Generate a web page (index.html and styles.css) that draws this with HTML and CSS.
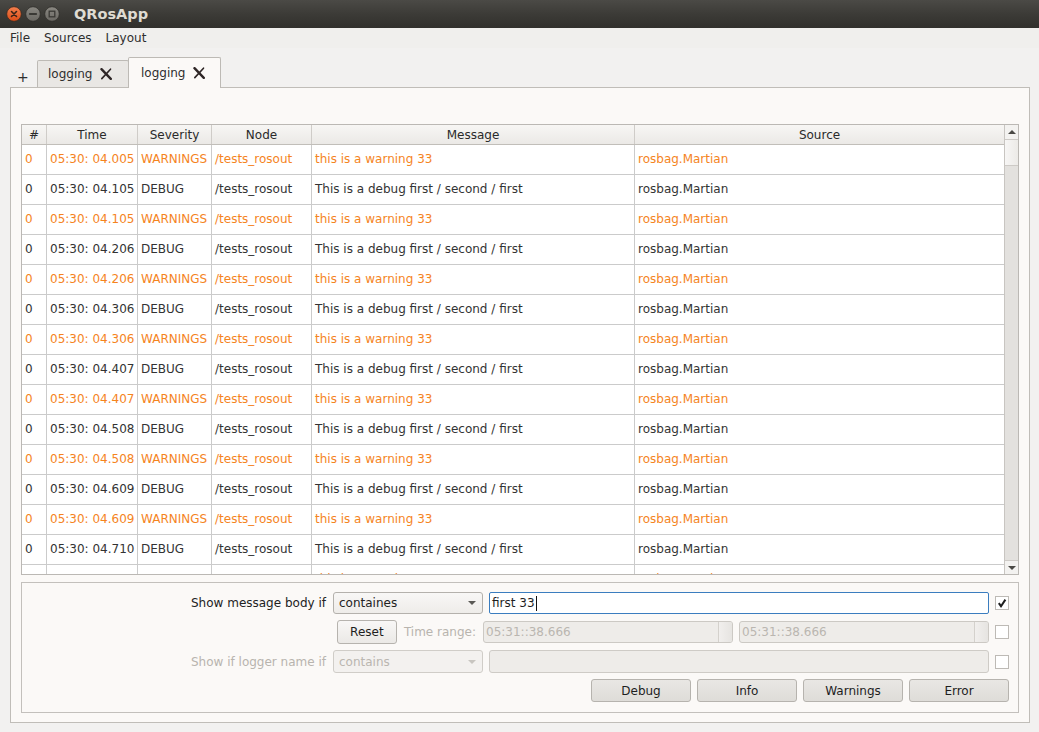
FILE: index.html
```html
<!DOCTYPE html>
<html>
<head>
<meta charset="utf-8">
<link rel="stylesheet" href="styles.css">
</head>
<body>
<div class="titlebar">
  <div class="wbtns">
    <svg class="wbtn" width="16" height="16" viewBox="0 0 16 16"><defs><linearGradient id="gc" x1="0" y1="0" x2="0" y2="1"><stop offset="0" stop-color="#f4804e"/><stop offset="1" stop-color="#dd4c17"/></linearGradient></defs><circle cx="8" cy="8" r="7.3" fill="url(#gc)" stroke="#3a2a20" stroke-width="0.8"/><path d="M5.5 5.5 L10.5 10.5 M10.5 5.5 L5.5 10.5" stroke="#3b2418" stroke-width="1.6" stroke-linecap="round"/></svg>
    <svg class="wbtn" width="16" height="16" viewBox="0 0 16 16"><defs><linearGradient id="gg" x1="0" y1="0" x2="0" y2="1"><stop offset="0" stop-color="#8a8882"/><stop offset="1" stop-color="#6a6863"/></linearGradient></defs><circle cx="8" cy="8" r="7.3" fill="url(#gg)" stroke="#2e2d2a" stroke-width="0.8"/><path d="M4.8 8 H11.2" stroke="#3a3935" stroke-width="1.8" stroke-linecap="round"/></svg>
    <svg class="wbtn" width="16" height="16" viewBox="0 0 16 16"><circle cx="8" cy="8" r="7.3" fill="url(#gg)" stroke="#2e2d2a" stroke-width="0.8"/><rect x="5.2" y="5.2" width="5.6" height="5.6" fill="none" stroke="#3a3935" stroke-width="1.3"/></svg>
  </div>
  <div class="wtitle">QRosApp</div>
</div>
<div class="menubar">
  <span class="mitem">File</span>
  <span class="mitem">Sources</span>
  <span class="mitem">Layout</span>
</div>
<div class="tabbar">
  <span class="plus">+</span>
  <div class="tab">
    <span>logging</span>
    <svg class="tabx" width="12" height="12" viewBox="0 0 12 12"><path d="M1.5 1.2 L10.8 10.8" stroke="#2e2626" stroke-width="2.4" stroke-linecap="round"/><path d="M10.5 1.2 L1.8 10.6" stroke="#2e2626" stroke-width="1.6" stroke-linecap="round"/></svg>
  </div>
  <div class="tab active">
    <span>logging</span>
    <svg class="tabx" width="12" height="12" viewBox="0 0 12 12"><path d="M1.5 1.2 L10.8 10.8" stroke="#2e2626" stroke-width="2.4" stroke-linecap="round"/><path d="M10.5 1.2 L1.8 10.6" stroke="#2e2626" stroke-width="1.6" stroke-linecap="round"/></svg>
  </div>
</div>
<div class="pane">
  <div class="tablebox">
    <div class="tablecol">
      <div class="row head">
        <div class="c">#</div><div class="c">Time</div><div class="c">Severity</div><div class="c">Node</div><div class="c">Message</div><div class="c last">Source</div>
      </div>
      <div class="row warn"><div class="c">0</div><div class="c">05:30: 04.005</div><div class="c">WARNINGS</div><div class="c">/tests_rosout</div><div class="c">this is a warning 33</div><div class="c last">rosbag.Martian</div></div>
      <div class="row"><div class="c">0</div><div class="c">05:30: 04.105</div><div class="c">DEBUG</div><div class="c">/tests_rosout</div><div class="c">This is a debug first / second / first</div><div class="c last">rosbag.Martian</div></div>
      <div class="row warn"><div class="c">0</div><div class="c">05:30: 04.105</div><div class="c">WARNINGS</div><div class="c">/tests_rosout</div><div class="c">this is a warning 33</div><div class="c last">rosbag.Martian</div></div>
      <div class="row"><div class="c">0</div><div class="c">05:30: 04.206</div><div class="c">DEBUG</div><div class="c">/tests_rosout</div><div class="c">This is a debug first / second / first</div><div class="c last">rosbag.Martian</div></div>
      <div class="row warn"><div class="c">0</div><div class="c">05:30: 04.206</div><div class="c">WARNINGS</div><div class="c">/tests_rosout</div><div class="c">this is a warning 33</div><div class="c last">rosbag.Martian</div></div>
      <div class="row"><div class="c">0</div><div class="c">05:30: 04.306</div><div class="c">DEBUG</div><div class="c">/tests_rosout</div><div class="c">This is a debug first / second / first</div><div class="c last">rosbag.Martian</div></div>
      <div class="row warn"><div class="c">0</div><div class="c">05:30: 04.306</div><div class="c">WARNINGS</div><div class="c">/tests_rosout</div><div class="c">this is a warning 33</div><div class="c last">rosbag.Martian</div></div>
      <div class="row"><div class="c">0</div><div class="c">05:30: 04.407</div><div class="c">DEBUG</div><div class="c">/tests_rosout</div><div class="c">This is a debug first / second / first</div><div class="c last">rosbag.Martian</div></div>
      <div class="row warn"><div class="c">0</div><div class="c">05:30: 04.407</div><div class="c">WARNINGS</div><div class="c">/tests_rosout</div><div class="c">this is a warning 33</div><div class="c last">rosbag.Martian</div></div>
      <div class="row"><div class="c">0</div><div class="c">05:30: 04.508</div><div class="c">DEBUG</div><div class="c">/tests_rosout</div><div class="c">This is a debug first / second / first</div><div class="c last">rosbag.Martian</div></div>
      <div class="row warn"><div class="c">0</div><div class="c">05:30: 04.508</div><div class="c">WARNINGS</div><div class="c">/tests_rosout</div><div class="c">this is a warning 33</div><div class="c last">rosbag.Martian</div></div>
      <div class="row"><div class="c">0</div><div class="c">05:30: 04.609</div><div class="c">DEBUG</div><div class="c">/tests_rosout</div><div class="c">This is a debug first / second / first</div><div class="c last">rosbag.Martian</div></div>
      <div class="row warn"><div class="c">0</div><div class="c">05:30: 04.609</div><div class="c">WARNINGS</div><div class="c">/tests_rosout</div><div class="c">this is a warning 33</div><div class="c last">rosbag.Martian</div></div>
      <div class="row"><div class="c">0</div><div class="c">05:30: 04.710</div><div class="c">DEBUG</div><div class="c">/tests_rosout</div><div class="c">This is a debug first / second / first</div><div class="c last">rosbag.Martian</div></div>
      <div class="row warn"><div class="c">0</div><div class="c">05:30: 04.710</div><div class="c">WARNINGS</div><div class="c">/tests_rosout</div><div class="c">this is a warning 33</div><div class="c last">rosbag.Martian</div></div>
    </div>
    <div class="vscroll">
      <div class="sb-btn up"><span class="tri-up"></span></div>
      <div class="sb-handle"></div>
      <div class="sb-track"></div>
      <div class="sb-btn down"><span class="tri-down"></span></div>
    </div>
  </div>
  <div class="filters">
    <div class="frow r1">
      <span class="flabel">Show message body if</span>
      <div class="combo"><span>containes</span><span class="carrow"></span></div>
      <div class="edit focus"><span>first 33</span><span class="caret"></span></div>
      <div class="check on"><svg width="12" height="12" viewBox="0 0 12 12"><path d="M2.8 6.2 L5 9.2 L9.4 2.6" fill="none" stroke="#1e1e1e" stroke-width="2"/></svg></div>
    </div>
    <div class="frow r2">
      <div class="btn reset">Reset</div>
      <span class="flabel dis">Time range:</span>
      <div class="timeedit"><span>05:31::38.666</span><span class="spin"></span></div>
      <div class="timeedit"><span>05:31::38.666</span><span class="spin"></span></div>
      <div class="check"></div>
    </div>
    <div class="frow r3">
      <span class="flabel dis">Show if logger name if</span>
      <div class="combo disabled"><span>contains</span><span class="carrow"></span></div>
      <div class="edit disabled"></div>
      <div class="check"></div>
    </div>
    <div class="frow r4">
      <div class="btn lvl">Debug</div>
      <div class="btn lvl">Info</div>
      <div class="btn lvl">Warnings</div>
      <div class="btn lvl">Error</div>
    </div>
  </div>
</div>
</body>
</html>
```
FILE: styles.css
```css
* { box-sizing: border-box; }
html, body { margin: 0; padding: 0; }
body {
  width: 1039px;
  height: 732px;
  overflow: hidden;
  background: #f2f1f0;
  font-family: "DejaVu Sans", sans-serif;
  font-size: 12px;
  color: #333333;
}

/* title bar */
.titlebar {
  height: 28px;
  background: linear-gradient(#4b4a46, #3c3b37 50%, #31302c);
  display: flex;
  align-items: center;
  padding-left: 6px;
}
.wbtns { display: flex; gap: 3px; align-items: center; }
.wbtn { display: block; }
.wtitle {
  margin-left: 14px;
  font-weight: bold;
  font-size: 14.5px;
  color: #dfdbd2;
}

/* menu */
.menubar {
  height: 20px;
  display: flex;
  align-items: center;
  padding-left: 10px;
  background: #f0efed;
}
.mitem { margin-right: 14px; color: #2e2e2e; }

/* tabs */
.tabbar {
  height: 39px;
  display: flex;
  align-items: flex-end;
  padding-left: 17px;
}
.plus {
  font-size: 14px;
  color: #2e2e2e;
  width: 20px;
  margin-bottom: 2px;
}
.tab {
  height: 27px;
  width: 92px;
  border: 1px solid #bdbab5;
  border-bottom: none;
  border-radius: 2px 2px 0 0;
  background: #e9e7e4;
  display: flex;
  align-items: center;
  padding-left: 10px;
  gap: 8px;
  color: #2e2e2e;
}
.tab.active {
  height: 31px;
  width: 93px;
  margin-bottom: -1px;
  margin-left: -1px;
  background: #fbf9f7;
  position: relative;
  z-index: 1;
  padding-left: 12px;
  padding-bottom: 1px;
}
.tabx { display: block; }

/* pane */
.pane {
  height: 636px;
  margin: 0 9px 0 10px;
  border: 1px solid #c0bdb8;
  background: #fbf9f7;
  padding: 36px 10px 9px 10px;
  display: flex;
  flex-direction: column;
  gap: 7px;
}

/* table */
.tablebox {
  height: 451px;
  border: 1px solid #bbb8b4;
  display: flex;
  background: #ffffff;
  overflow: hidden;
  flex-shrink: 0;
}
.tablecol {
  width: 982px;
  height: 449px;
  overflow: hidden;
}
.row {
  display: grid;
  grid-template-columns: 25px 91px 74px 100px 323px 369px;
  height: 30px;
  border-bottom: 1px solid #cbcbcb;
}
.c {
  border-right: 1px solid #cbcbcb;
  padding-left: 3px;
  padding-bottom: 2px;
  display: flex;
  align-items: center;
  white-space: nowrap;
  overflow: hidden;
}
.c.last { border-right: none; }
.row.warn { color: #f5841e; }
.row.head {
  height: 20px;
  background: linear-gradient(#f7f6f4, #ebe9e6);
  border-bottom: 1px solid #c1beb9;
  color: #2a2a2a;
}
.row.head .c {
  justify-content: center;
  padding-left: 0;
  padding-bottom: 0;
  border-right-color: #cfccc8;
}

/* scrollbar */
.vscroll {
  width: 14px;
  border-left: 1px solid #c8c5c1;
  background: #e3e1de;
  display: flex;
  flex-direction: column;
}
.sb-btn {
  height: 15px;
  background: #f3f2f0;
  display: flex;
  align-items: center;
  justify-content: center;
}
.sb-btn.up { border-bottom: 1px solid #cdcac6; }
.sb-btn.down { height: 14px; border-top: 1px solid #cdcac6; }
.sb-handle {
  height: 26px;
  background: linear-gradient(90deg, #f7f6f5, #eceae7);
  border-bottom: 1px solid #cdcac6;
}
.sb-track { flex: 1; }
.tri-up {
  width: 0; height: 0;
  border-left: 4px solid transparent;
  border-right: 4px solid transparent;
  border-bottom: 4px solid #4a4945;
}
.tri-down {
  width: 0; height: 0;
  border-left: 4px solid transparent;
  border-right: 4px solid transparent;
  border-top: 4px solid #4a4945;
}

/* filters */
.filters {
  height: 131px;
  border: 1px solid #c3c0bc;
  background: #fbf9f7;
  padding: 9px 9px 10px 9px;
  display: flex;
  flex-direction: column;
  gap: 6px;
  flex-shrink: 0;
}
.frow {
  display: flex;
  justify-content: flex-end;
  align-items: center;
  gap: 6px;
}
.r1 { height: 22px; }
.r2 { height: 24px; }
.r3 { height: 23px; }
.r4 { height: 23px; }
.flabel { color: #222222; margin-right: 1px; }
.flabel.dis { color: #b8b4ae; }

.combo {
  width: 150px;
  height: 22px;
  border: 1px solid #b4b1ac;
  border-radius: 3px;
  background: linear-gradient(#f8f7f6, #eeece9);
  display: flex;
  align-items: center;
  justify-content: space-between;
  padding: 0 6px 0 5px;
  color: #222222;
}
.combo.disabled {
  height: 23px;
  border-color: #d0cdc8;
  background: #f3f1ef;
  color: #bab6b0;
}
.carrow {
  width: 0; height: 0;
  border-left: 4px solid transparent;
  border-right: 4px solid transparent;
  border-top: 4px solid #5a5955;
}
.combo.disabled .carrow { border-top-color: #c8c5c0; }

.edit {
  width: 500px;
  height: 22px;
  border: 1px solid #bcb9b4;
  border-radius: 2px;
  background: #ffffff;
  display: flex;
  align-items: center;
  padding-left: 2px;
  color: #1e1e1e;
}
.edit.focus { border-color: #3b7dbf; }
.edit.disabled {
  height: 23px;
  border-color: #cecbc6;
  background: #eeece9;
  border-radius: 3px;
}
.caret {
  width: 1px;
  height: 15px;
  background: #111111;
  margin-left: 1px;
}

.check {
  width: 14px;
  height: 14px;
  border: 1px solid #bdbab5;
  background: #ffffff;
  display: flex;
  align-items: center;
  justify-content: center;
}
.check svg { display: block; }

.timeedit {
  width: 250px;
  height: 22px;
  border: 1px solid #ccc9c4;
  border-radius: 3px;
  background: #eeece9;
  display: flex;
  align-items: center;
  justify-content: space-between;
  padding-left: 2px;
  color: #bab6b0;
  overflow: hidden;
}
.spin {
  width: 14px;
  height: 100%;
  border-left: 1px solid #d4d1cc;
  background: linear-gradient(90deg, #f1efed, #e6e4e1);
}

.btn {
  height: 23px;
  border: 1px solid #b6b3ae;
  border-radius: 3px;
  display: flex;
  align-items: center;
  justify-content: center;
  color: #1e1e1e;
}
.btn.reset {
  width: 60px;
  height: 24px;
  background: linear-gradient(#f8f7f6, #ebe9e6);
  margin-right: 1px;
}
.btn.lvl {
  width: 100px;
  background: linear-gradient(#e9e7e4, #dedcd8);
}
```
